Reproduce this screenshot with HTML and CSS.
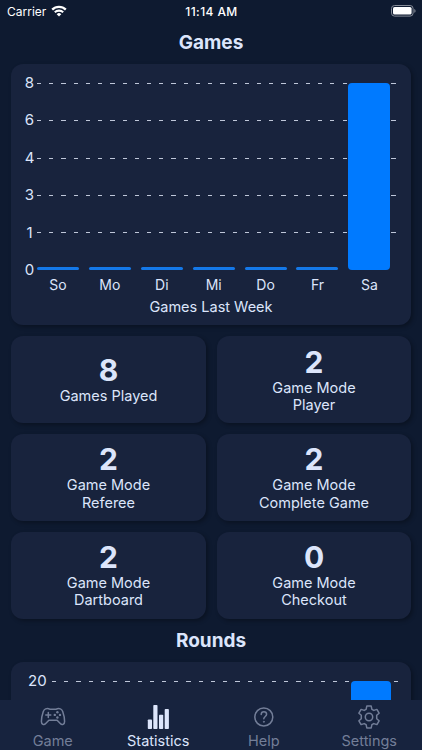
FILE: index.html
```html
<!DOCTYPE html>
<html lang="en">
<head>
  <meta charset="UTF-8" />
  <meta name="viewport" content="width=device-width, initial-scale=1.0"/>
  <title>Statistics</title>
  <link rel="stylesheet" href="styles.css">
</head>
<body>

  <!-- Status bar -->
  <header class="status-bar">
    <div class="carrier">
      <span>Carrier</span>
      <svg class="wifi" viewBox="0 0 16 12">
        <path d="M1.2 4.6a9.7 9.7 0 0 1 13.6 0" fill="none" stroke="#fff" stroke-width="2.3"/>
        <path d="M3.8 7.3a6 6 0 0 1 8.4 0" fill="none" stroke="#fff" stroke-width="2.1"/>
        <path d="M5.7 9.2a3.3 3.3 0 0 1 4.6 0L8 11.5z" fill="#fff"/>
      </svg>
    </div>
    <span class="time">11:14 AM</span>
    <svg class="battery" viewBox="0 0 25 12">
      <rect x=".5" y=".5" width="21.6" height="10.6" rx="3" fill="none" stroke="#858b97"/>
      <rect x="2" y="2" width="18.6" height="7.6" rx="1.6" fill="#fff"/>
      <path d="M23.3 4v3.8c.8-.3 1.2-1 1.2-1.9s-.4-1.6-1.2-1.9z" fill="#858b97"/>
    </svg>
  </header>

  <main>
    <h2>Games</h2>
    <section class="card chart-card">
      <div class="chart">
        <div class="y-axis">
          <span>8</span><span>6</span><span>4</span><span>3</span><span>1</span><span>0</span>
        </div>
        <div class="plot">
          <div class="lines"><i></i><i></i><i></i><i></i><i></i></div>
          <div class="bars">
            <b></b><b></b><b></b><b></b><b></b><b></b><b class="full"></b>
          </div>
        </div>
      </div>
      <div class="x-axis">
        <span>So</span><span>Mo</span><span>Di</span><span>Mi</span><span>Do</span><span>Fr</span><span>Sa</span>
      </div>
      <p class="caption">Games Last Week</p>
    </section>

    <section class="tiles">
      <div class="card tile"><strong>8</strong><span>Games Played</span></div>
      <div class="card tile"><strong>2</strong><span>Game Mode<br>Player</span></div>
      <div class="card tile"><strong>2</strong><span>Game Mode<br>Referee</span></div>
      <div class="card tile"><strong>2</strong><span>Game Mode<br>Complete Game</span></div>
      <div class="card tile"><strong>2</strong><span>Game Mode<br>Dartboard</span></div>
      <div class="card tile"><strong>0</strong><span>Game Mode<br>Checkout</span></div>
    </section>

    <h2 class="rounds-title">Rounds</h2>
    <section class="card rounds-card">
      <span class="rounds-label">20</span>
      <div class="plot rounds-plot">
        <div class="lines"><i></i></div>
        <div class="bars"><b class="full"></b></div>
      </div>
    </section>
  </main>

  <!-- Bottom navigation -->
  <nav class="tab-bar">
    <a class="tab">
      <svg viewBox="0 0 26 24" fill="none" stroke="currentColor" stroke-width="1.5" stroke-linecap="round" stroke-linejoin="round">
        <path d="M5.6 3.9C7 3.200 8.5 3.300 9.700 4.200h6.600c1.200-.9 2.700-1 4.100-.3 1.200.5 1.800 1.200 2.300 2.600 1.200 3.400 2 7.100 1.900 10.100 0 2.900-2.500 3.900-4.300 2l-3.200-3.300H8.900l-3.200 3.300c-1.800 1.900-4.300.9-4.300-2 0-3 .7-6.700 1.900-10.100.5-1.400 1.100-2.100 2.300-2.600z"/>
        <path d="M8.300 7.400v5M5.800 9.900h5"/>
        <g fill="currentColor" stroke="none">
          <circle cx="17.400" cy="7.300" r="1.200"/><circle cx="17.400" cy="12.500" r="1.200"/>
          <circle cx="14.800" cy="9.900" r="1.200"/><circle cx="20" cy="9.900" r="1.200"/>
        </g>
      </svg>
      <span>Game</span>
    </a>
    <a class="tab active">
      <svg viewBox="0 0 26 24" fill="currentColor">
        <rect x="2.800" y="14.500" width="4.200" height="9.500" rx=".8"/>
        <rect x="8.300" y="0" width="4.200" height="24" rx=".8"/>
        <rect x="14" y="9.800" width="4.200" height="14.200" rx=".8"/>
        <rect x="19.700" y="4.100" width="4.200" height="19.900" rx=".8"/>
      </svg>
      <span>Statistics</span>
    </a>
    <a class="tab">
      <svg viewBox="0 0 26 24" fill="none" stroke="currentColor" stroke-width="1.500" stroke-linecap="round">
        <circle cx="12.800" cy="12" r="9"/>
        <path d="M10.200 9.500c0-1.700 1.200-2.700 2.700-2.700s2.700 1 2.700 2.500c0 2.200-2.800 2.200-2.800 4.500"/>
        <circle cx="12.800" cy="16.800" r=".5" fill="currentColor" stroke-width=".8"/>
      </svg>
      <span>Help</span>
    </a>
    <a class="tab">
      <svg viewBox="0 0 26 24" fill="none" stroke="currentColor" stroke-width="1.500" stroke-linejoin="round">
        <path d="M10.800 1.100h4.400l.7 3.200 1.900 1.100 3.100-1 2.200 3.800-2.400 2.100v3.400l2.400 2.100-2.200 3.800-3.100-1-1.900 1.100-.7 3.200h-4.400l-.7-3.200-1.900-1.100-3.100 1-2.200-3.800 2.400-2.100v-3.400L2.900 8.200l2.200-3.800 3.100 1 1.900-1.100z"/>
        <circle cx="13" cy="12" r="3.700"/>
      </svg>
      <span>Settings</span>
    </a>
  </nav>

</body>
</html>
```
FILE: styles.css
```css
:root {
  --bg: #0e1a30;
  --card: #18233d;
  --text: #dce5fb;
  --muted: #737e98;
  --blue: #007aff;
}

* {
  box-sizing: border-box;
}

body {
  margin: 0;
  height: 750px;
  display: flex;
  flex-direction: column;
  overflow: hidden;
  background: var(--bg);
  color: var(--text);
  font-family: 'Inter', sans-serif;
  font-size: 14.5px;
}

.status-bar {
  flex: none;
  display: grid;
  grid-template-columns: 1fr auto 1fr;
  align-items: center;
  height: 22px;
  padding: 0 6px 0 7px;
  color: #fff;
  font-size: 12px;
}

.carrier {
  display: flex;
  align-items: center;
  gap: 5px;
}

.wifi {
  width: 16px;
  height: 12px;
}

.time {
  font-weight: 500;
  letter-spacing: 0.4px;
}

.battery {
  width: 25px;
  height: 12px;
  justify-self: end;
}

main {
  flex: 1;
  min-height: 0;
  overflow: hidden;
  padding: 0 11px;
}

h2 {
  margin: 0;
  height: 42px;
  line-height: 41px;
  font-size: 19px;
  font-weight: 700;
  text-align: center;
}

.card {
  background: var(--card);
  border-radius: 12px;
  box-shadow: 2px 2px 4px rgba(0, 0, 0, 0.3);
}

.chart-card {
  height: 261px;
  padding: 19px 15px 0 12px;
}

.chart {
  display: flex;
  height: 187px;
}

.y-axis {
  width: 14px;
  height: 205px;
  margin-top: -9px;
  padding-right: 1px;
  display: flex;
  flex-direction: column;
  justify-content: space-between;
  line-height: 18px;
  font-size: 15px;
  text-align: center;
}

/* Lines and bars share the same cell */
.plot {
  flex: 1;
  display: grid;
}

.lines,
.bars {
  grid-area: 1 / 1;
}

.lines i {
  display: block;
  height: 1px;
  margin-bottom: 36.3px;
  background: repeating-linear-gradient(90deg, #bfc7d9 0 4.2px, transparent 4.2px 12.22px);
}

.bars {
  display: flex;
  align-items: flex-end;
  gap: 9.9px;
}

.bars b {
  width: 42px;
  height: 3.5px;
  border-radius: 1.5px;
  background: #1478e8;
}

.bars .full {
  height: 100%;
  border-radius: 4px;
  background: var(--blue);
}

.x-axis {
  display: flex;
  gap: 9.9px;
  margin: 5px 0 0 14px;
  line-height: 19px;
  font-size: 14px;
}

.x-axis span {
  width: 42px;
  text-align: center;
}

.caption {
  margin: 3px -3px 0 0;
  line-height: 20px;
  text-align: center;
}

.tiles {
  display: grid;
  grid-template-columns: 195px 194px;
  grid-auto-rows: 87px;
  gap: 10.7px 11px;
  margin-top: 11.3px;
}

.tile {
  display: flex;
  flex-direction: column;
  align-items: center;
  justify-content: center;
  padding-bottom: 1.6px;
  text-align: center;
  line-height: 17.4px;
}

.tile strong {
  font-size: 30px;
  line-height: 34px;
}

.rounds-title {
  height: 43px;
  line-height: 43px;
}

.rounds-card {
  display: flex;
  height: 261px;
  padding: 19px 11px 0 15px;
}

.rounds-label {
  width: 26px;
  margin-top: -9px;
  padding-left: 2px;
  line-height: 18px;
  font-size: 15px;
}

.rounds-plot .bars {
  justify-content: flex-end;
  padding-right: 9px;
}

.rounds-plot .full {
  width: 40px;
}

.tab-bar {
  flex: none;
  display: grid;
  grid-template-columns: repeat(4, 1fr);
  height: 50px;
  background: #17233e;
}

.tab {
  display: flex;
  flex-direction: column;
  align-items: center;
  padding-top: 5px;
  color: var(--muted);
}

.tab svg {
  width: 26px;
  height: 24px;
}

.tab span {
  line-height: 19px;
  margin-top: 2px;
}

.tab.active {
  color: var(--text);
}
```
